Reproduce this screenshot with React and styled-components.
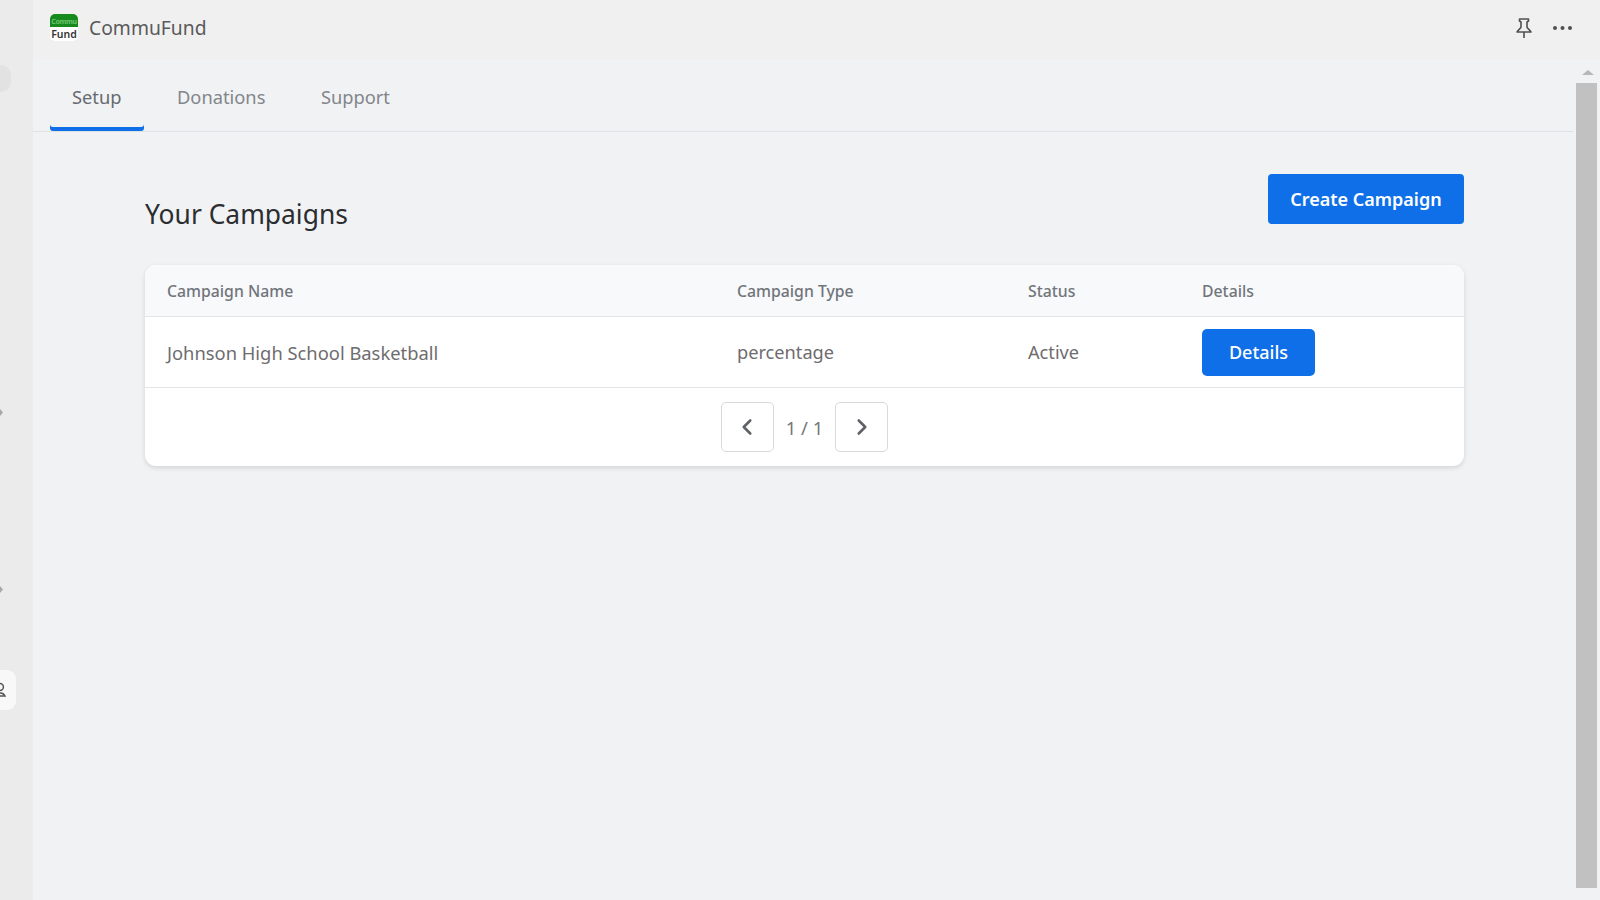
import React from "react";
import styled, { createGlobalStyle } from "styled-components";
import { FiChevronLeft, FiChevronRight } from "react-icons/fi";

const tabs = ["Setup", "Donations", "Support"];

const App = () => {
  return (
    <Page>
      <GlobalStyle />
      <Rail>
        <RailBlob />
        <RailChevron $top={317} />
        <RailChevron $top={170} />
        <RailUser>
          <svg width="10" height="16" viewBox="0 0 10 16" fill="none" stroke="#555" strokeWidth="1.5">
            <circle cx="0" cy="5" r="3.4" />
            <path d="M-4 14 C-2 10 3 10 5 14 Z" />
          </svg>
        </RailUser>
      </Rail>
      <Main>
        <TopBar>
          <Brand>
            <Logo>
              <LogoTop>Commu</LogoTop>
              <LogoBottom>Fund</LogoBottom>
            </Logo>
            <AppName>CommuFund</AppName>
          </Brand>
          <TopActions>
            <svg width="16" height="21" viewBox="0 0 16 21" fill="none" stroke="currentColor" strokeWidth="1.6" strokeLinejoin="round">
              <path d="M3.5 1 H12.5 V3 L11 4 V9 C11 10.5 14 11.5 15 14 H1 C2 11.5 5 10.5 5 9 V4 L3.5 3 Z M8 14 V20" />
            </svg>
            <svg width="19" height="4" viewBox="0 0 19 4" fill="currentColor">
              <circle cx="2" cy="2" r="2" />
              <circle cx="9.5" cy="2" r="2" />
              <circle cx="17" cy="2" r="2" />
            </svg>
          </TopActions>
        </TopBar>
        <Body>
          <Scroller>
            <TabBar>
              {tabs.map((tab, i) => (
                <Tab key={tab} $active={i === 0}>{tab}</Tab>
              ))}
            </TabBar>
            <Content>
              <HeadingRow>
                <Title>Your Campaigns</Title>
                <CreateButton>Create Campaign</CreateButton>
              </HeadingRow>
              <Card>
                <HeadRow>
                  <div>Campaign Name</div>
                  <div>Campaign Type</div>
                  <div>Status</div>
                  <div>Details</div>
                </HeadRow>
                <DataRow>
                  <NameCell>Johnson High School Basketball</NameCell>
                  <div>percentage</div>
                  <div>Active</div>
                  <DetailsButton>Details</DetailsButton>
                </DataRow>
                <Pager>
                  <PageButton><FiChevronLeft size={26} strokeWidth={2.4} /></PageButton>
                  <PageText>1 / 1</PageText>
                  <PageButton><FiChevronRight size={26} strokeWidth={2.4} /></PageButton>
                </Pager>
              </Card>
            </Content>
          </Scroller>
          <ScrollTrack>
            <ScrollArrow />
            <ScrollThumb />
          </ScrollTrack>
        </Body>
      </Main>
    </Page>
  );
};

const GlobalStyle = createGlobalStyle`
  html, body {
    margin: 0;
    height: 100%;
    overflow: hidden;
    font-family: "Noto Sans", "Open Sans", sans-serif;
  }
`;
const Page = styled.div`
  display: flex;
  width: 1600px;
  height: 900px;
  background: #f1f2f4;
  overflow: hidden;
`;
const Rail = styled.div`
  width: 33px;
  flex: none;
  display: flex;
  flex-direction: column;
  background: #ebebeb;
`;
const RailBlob = styled.div`
  width: 11px;
  height: 27px;
  margin-top: 65px;
  background: #e2e2e2;
  border-radius: 0 10px 10px 0;
`;
const RailChevron = styled.div`
  width: 3px;
  height: 7px;
  margin-top: ${(p) => p.$top}px;
  background: #a8a8a8;
  clip-path: polygon(0 0, 100% 50%, 0 100%);
`;
const RailUser = styled.div`
  width: 16px;
  height: 40px;
  margin-top: 77px;
  display: flex;
  align-items: center;
  background: #f8f8f8;
  border-radius: 0 9px 9px 0;
`;
const Main = styled.div`
  flex: 1;
  min-width: 0;
  display: flex;
  flex-direction: column;
`;
const TopBar = styled.div`
  height: 60px;
  flex: none;
  display: flex;
  align-items: center;
  justify-content: space-between;
  padding: 0 28px 0 17px;
  background: #f0f0f0;
`;
const Brand = styled.div`
  display: flex;
  align-items: center;
  gap: 11px;
`;
const Logo = styled.div`
  width: 28px;
  height: 27px;
  margin-top: -5px;
  display: flex;
  flex-direction: column;
  border-radius: 5px;
  overflow: hidden;
  background: #fff;
`;
const LogoTop = styled.div`
  height: 13px;
  background: #168a1c;
  color: #6fc46f;
  font-size: 7px;
  font-weight: 700;
  line-height: 15px;
  text-align: center;
  letter-spacing: -0.3px;
  overflow: hidden;
`;
const LogoBottom = styled.div`
  color: #333;
  font-size: 10.5px;
  font-weight: 600;
  line-height: 14px;
  text-align: center;
`;
const AppName = styled.div`
  font-size: 19.3px;
  color: #5a5a5a;
  margin-top: -6px;
`;
const TopActions = styled.div`
  display: flex;
  align-items: center;
  gap: 21px;
  margin-top: -4px;
  color: #505050;
`;
const Body = styled.div`
  flex: 1;
  min-height: 0;
  display: flex;
`;
const Scroller = styled.div`
  flex: 1;
  min-width: 0;
`;
const TabBar = styled.div`
  height: 71px;
  display: flex;
  padding-left: 17px;
  gap: 11.5px;
  border-bottom: 1px solid #dfe2e5;
  margin-right: 3px;
`;
const Tab = styled.div`
  display: flex;
  align-items: center;
  padding: 1px 22px 0;
  height: 71px;
  font-size: 18.3px;
  color: ${(p) => (p.$active ? "#656a70" : "#82868b")};
  box-shadow: ${(p) => (p.$active ? "inset 0 -4px 0 #0f6fe8" : "none")};
  border-radius: 0 0 3px 3px;
  box-sizing: border-box;
`;
const Content = styled.div`
  padding: 0 112px;
`;
const HeadingRow = styled.div`
  height: 133px;
  display: flex;
  align-items: flex-start;
  justify-content: space-between;
`;
const Title = styled.h2`
  margin: 64px 0 0;
  font-size: 26.4px;
  font-weight: 400;
  line-height: 36px;
  color: #2b2d30;
`;
const CreateButton = styled.button`
  margin-top: 42px;
  width: 196px;
  height: 50px;
  border: none;
  border-radius: 4px;
  background: #0f6fe8;
  color: #fff;
  font-family: inherit;
  font-size: 18px;
  font-weight: 600;
`;
const Card = styled.div`
  background: #fff;
  border-radius: 11px;
  box-shadow: 0 2px 5px rgba(0, 0, 0, 0.12);
  overflow: hidden;
`;
const Row = styled.div`
  display: grid;
  grid-template-columns: 570px 291px 174px 1fr;
  align-items: center;
  padding-left: 22px;
  border-bottom: 1px solid #e3e4e6;
  box-sizing: border-box;
`;
const HeadRow = styled(Row)`
  height: 52px;
  background: #f8f9fa;
  font-size: 15.8px;
  font-weight: 500;
  color: #70757b;
`;
const DataRow = styled(Row)`
  height: 71px;
  font-size: 18.2px;
  color: #6e6c6e;
`;
const NameCell = styled.div`
  font-size: 18.35px;
`;
const DetailsButton = styled.button`
  width: 113px;
  height: 47px;
  border: none;
  border-radius: 5px;
  background: #0f6fe8;
  color: #fff;
  font-family: inherit;
  font-size: 18px;
  font-weight: 500;
`;
const Pager = styled.div`
  height: 78px;
  display: flex;
  align-items: center;
  justify-content: center;
  gap: 12px;
  box-sizing: border-box;
`;
const PageButton = styled.div`
  width: 53px;
  height: 50px;
  box-sizing: border-box;
  display: flex;
  align-items: center;
  justify-content: center;
  background: #fff;
  border: 1px solid #d8d9db;
  border-radius: 5px;
  color: #5f6368;
`;
const PageText = styled.div`
  font-size: 18.5px;
  color: #75777a;
`;
const ScrollTrack = styled.div`
  width: 24px;
  flex: none;
  display: flex;
  flex-direction: column;
  align-items: center;
`;
const ScrollArrow = styled.div`
  width: 0;
  height: 0;
  margin: 10px 0 8px;
  border-left: 6px solid transparent;
  border-right: 6px solid transparent;
  border-bottom: 5px solid #b5b7b8;
`;
const ScrollThumb = styled.div`
  width: 21px;
  height: 805px;
  margin-right: 3px;
  background: #c1c1c1;
`;

export default App;
